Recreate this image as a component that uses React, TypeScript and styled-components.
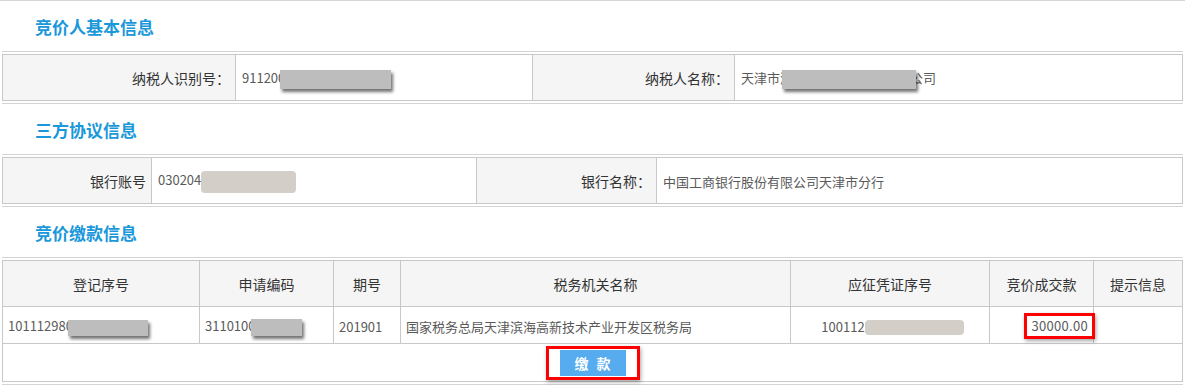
import styled, { createGlobalStyle } from "styled-components";

const GlobalStyle = createGlobalStyle`
  body {
    margin: 0;
    background: #fff;
    font-family: "Noto Sans CJK SC", "Noto Sans", sans-serif;
  }
`;

const Page = styled.div`
  border-top: 1px solid #d6d6d6;
  padding: 0 2px;
`;

const Title = styled.h3`
  margin: 0;
  height: 50px;
  display: flex;
  align-items: center;
  padding-left: 33px;
  font-size: 17px;
  font-weight: bold;
  color: #1a98da;
`;

const Panel = styled.div`
  border-top: 1px solid #d4d4d4;
  border-bottom: 1px solid #d4d4d4;
  padding: 2px 0;
`;

const Table = styled.table`
  width: 100%;
  table-layout: fixed;
  border-collapse: collapse;
  border: 1px solid #c8c8c8;
`;

const Label = styled.td`
  height: 45px;
  padding: 0 5px 0 0;
  border: 1px solid #c8c8c8;
  background: #f5f5f5;
  text-align: right;
  font-size: 14px;
  color: #333;
`;

const Value = styled.td`
  padding: 2px 0 0 6px;
  border: 1px solid #c8c8c8;
  font-size: 13px;
  color: #5a5a5a;
  white-space: nowrap;
  overflow: hidden;
`;

const Head = styled.th`
  height: 45px;
  padding: 0;
  border: 1px solid #c8c8c8;
  background: #f5f5f5;
  font-size: 14px;
  font-weight: normal;
  color: #333;
`;

const Cell = styled.td<{ $align?: "left" | "center" | "right" }>`
  height: 34px;
  padding: ${(p) => (p.$align === "right" ? "2px 0 0 0" : "2px 0 0 5px")};
  border: 1px solid #c8c8c8;
  font-size: 13px;
  color: #5a5a5a;
  white-space: nowrap;
  text-align: ${(p) => p.$align ?? "left"};
`;

const ActionCell = styled.td`
  height: 37px;
  padding: 0;
  border: 1px solid #c8c8c8;
  text-align: center;
`;

const ShadowMask = styled.span<{ $w: number; $h?: number; $overlap?: number }>`
  position: relative;
  display: inline-block;
  width: ${(p) => p.$w}px;
  height: ${(p) => p.$h ?? 19}px;
  margin-left: ${(p) => -(p.$overlap ?? 0)}px;
  background: #bdbdbd;
  vertical-align: middle;
  box-shadow: 2px 3px 3px rgba(0, 0, 0, 0.55);
`;

const PlainMask = styled.span<{ $w: number; $h?: number }>`
  display: inline-block;
  width: ${(p) => p.$w}px;
  height: ${(p) => p.$h ?? 22}px;
  background: #d3cfc8;
  border-radius: 4px;
  vertical-align: middle;
`;

const Marked = styled.span`
  display: inline-block;
  border: 3px solid #f00;
  box-shadow: 1px 2px 4px rgba(0, 0, 0, 0.35);
`;

const Amount = styled(Marked)`
  padding: 3px 4px 3px 4px;
  margin-right: -2px;
  line-height: 14px;
  letter-spacing: 0.3px;
`;

const ButtonFrame = styled(Marked)`
  padding: 1px 11px;
  vertical-align: middle;
`;

const PayButton = styled.button`
  width: 66px;
  height: 26px;
  border: none;
  background: #57acef;
  color: #fff;
  font-family: inherit;
  font-size: 14px;
  font-weight: bold;
  letter-spacing: 8px;
  text-indent: 8px;
  cursor: pointer;
  display: block;
`;

export default function App() {
  return (
    <>
      <GlobalStyle />
      <Page>
        <Title>竞价人基本信息</Title>
        <Panel>
          <Table>
            <colgroup>
              <col style={{ width: 233 }} />
              <col style={{ width: 297 }} />
              <col style={{ width: 202 }} />
              <col />
            </colgroup>
            <tbody>
              <tr>
                <Label>纳税人识别号：</Label>
                <Value>
                  911200
                  <ShadowMask $w={111} $overlap={5} />
                </Value>
                <Label>纳税人名称：</Label>
                <Value>
                  天津市滨
                  <ShadowMask $w={134} $overlap={11} />
                  <span style={{ marginLeft: -6 }}>公司</span>
                </Value>
              </tr>
            </tbody>
          </Table>
        </Panel>

        <Title>三方协议信息</Title>
        <Panel>
          <Table>
            <colgroup>
              <col style={{ width: 149 }} />
              <col style={{ width: 325 }} />
              <col style={{ width: 180 }} />
              <col />
            </colgroup>
            <tbody>
              <tr>
                <Label>银行账号</Label>
                <Value>
                  030204
                  <PlainMask $w={95} />
                </Value>
                <Label>银行名称：</Label>
                <Value>中国工商银行股份有限公司天津市分行</Value>
              </tr>
            </tbody>
          </Table>
        </Panel>

        <Title>竞价缴款信息</Title>
        <Panel>
          <Table>
            <colgroup>
              <col style={{ width: 197 }} />
              <col style={{ width: 134 }} />
              <col style={{ width: 67 }} />
              <col style={{ width: 390 }} />
              <col style={{ width: 199 }} />
              <col style={{ width: 104 }} />
              <col />
            </colgroup>
            <thead>
              <tr>
                <Head>登记序号</Head>
                <Head>申请编码</Head>
                <Head>期号</Head>
                <Head>税务机关名称</Head>
                <Head>应征凭证序号</Head>
                <Head>竞价成交款</Head>
                <Head>提示信息</Head>
              </tr>
            </thead>
            <tbody>
              <tr>
                <Cell>
                  101112980
                  <ShadowMask $w={80} $h={16} $overlap={5} />
                </Cell>
                <Cell>
                  3110100
                  <ShadowMask $w={51} $h={17} $overlap={5} />
                </Cell>
                <Cell>201901</Cell>
                <Cell>国家税务总局天津滨海高新技术产业开发区税务局</Cell>
                <Cell $align="center">
                  100112
                  <PlainMask $w={99} $h={15} />
                </Cell>
                <Cell $align="right">
                  <Amount>30000.00</Amount>
                </Cell>
                <Cell />
              </tr>
              <tr>
                <ActionCell colSpan={7}>
                  <ButtonFrame>
                    <PayButton>缴款</PayButton>
                  </ButtonFrame>
                </ActionCell>
              </tr>
            </tbody>
          </Table>
        </Panel>
      </Page>
    </>
  );
}
